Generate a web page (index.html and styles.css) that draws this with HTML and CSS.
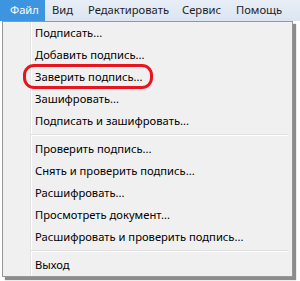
FILE: index.html
```html
<!DOCTYPE html>
<html lang="ru">
<head>
    <meta charset="UTF-8">
    <title>Меню Файл</title>
    <link rel="stylesheet" href="styles.css">
</head>
<body>
<div class="window">
    <div class="menubar">
        <div class="menubar-item active file">Файл</div>
        <div class="menubar-item view">Вид</div>
        <div class="menubar-item edit">Редактировать</div>
        <div class="menubar-item service">Сервис</div>
        <div class="menubar-item help">Помощь</div>
    </div>
    <div class="dropdown">
        <div class="menu-item">Подписать...</div>
        <div class="menu-item">Добавить подпись...</div>
        <div class="menu-item">Заверить подпись...</div>
        <div class="menu-item">Зашифровать...</div>
        <div class="menu-item">Подписать и зашифровать...</div>
        <div class="separator"></div>
        <div class="menu-item">Проверить подпись...</div>
        <div class="menu-item">Снять и проверить подпись...</div>
        <div class="menu-item">Расшифровать...</div>
        <div class="menu-item">Просмотреть документ...</div>
        <div class="menu-item">Расшифровать и проверить подпись...</div>
        <div class="separator"></div>
        <div class="menu-item">Выход</div>
        <div class="highlight-ring"></div>
    </div>
</div>
</body>
</html>
```

FILE: styles.css
```css
body, html {
    margin: 0;
    padding: 0;
    background: #ffffff;
    font-family: "Noto Sans", "Open Sans", sans-serif;
    font-size: 11.2px;
    color: #000;
}

.window {
    width: 300px;
    height: 281px;
    overflow: hidden;
}

.menubar {
    display: flex;
    height: 21px;
    background: linear-gradient(to bottom, #e8eef7, #dbe5f1);
}

.menubar-item {
    box-sizing: border-box;
    padding-left: 7px;
    line-height: 20px;
    color: #1e1e1e;
    white-space: nowrap;
    flex-shrink: 0;
}

.menubar-item.active {
    background: #3d95e0;
    color: #ffffff;
    padding-left: 10px;
}

.file { width: 45px; }
.view { width: 36px; }
.edit { width: 94px; }
.service { width: 54px; }
.help { width: 71px; }

.dropdown {
    position: relative;
    margin-left: 2px;
    width: 289px;
    border: 1px solid #979797;
    background: linear-gradient(to right, #f0f0f0 27px, #e2e3e3 27px, #e2e3e3 28px, #ffffff 28px, #ffffff 29px, #f0f0f0 29px);
    box-shadow: 3px 3px 1px rgba(0, 0, 0, 0.45);
}

.menu-item {
    height: 22px;
    line-height: 22px;
    padding-left: 32px;
    white-space: nowrap;
}

.separator {
    height: 6px;
    margin-left: 28px;
    margin-right: 4px;
    display: flex;
    flex-direction: column;
    justify-content: center;
}

.separator::before {
    content: "";
    display: block;
    height: 1px;
    background: #e0e0e0;
    border-bottom: 1px solid #ffffff;
}

.highlight-ring {
    position: absolute;
    left: 20px;
    top: 42px;
    width: 124px;
    height: 19px;
    border: 3px solid #e8141e;
    border-radius: 11px;
}
```
